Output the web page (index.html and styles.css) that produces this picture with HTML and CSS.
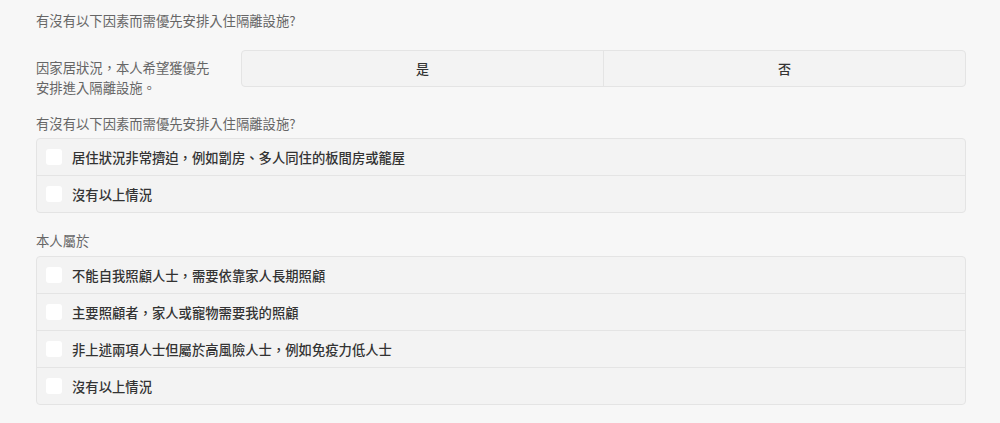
FILE: index.html
```html
<!DOCTYPE html>
<html lang="zh-HK">
<head>
    <meta charset="UTF-8">
    <meta name="viewport" content="width=device-width, initial-scale=1.0">
    <title>隔離設施申請</title>
    <link rel="stylesheet" href="styles.css">
</head>
<body>
    <div class="form">
        <p class="question question--top">有沒有以下因素而需優先安排入住隔離設施?</p>

        <!-- Yes / No row -->
        <div class="choice-row">
            <p class="choice-label">因家居狀況，本人希望獲優先安排進入隔離設施。</p>
            <div class="toggle">
                <button type="button" class="toggle__btn">是</button>
                <button type="button" class="toggle__btn">否</button>
            </div>
        </div>

        <p class="question">有沒有以下因素而需優先安排入住隔離設施?</p>
        <ul class="options">
            <li class="option"><span class="option__box"></span>居住狀況非常擠迫，例如劏房、多人同住的板間房或籠屋</li>
            <li class="option"><span class="option__box"></span>沒有以上情況</li>
        </ul>

        <p class="question question--spaced">本人屬於</p>
        <ul class="options">
            <li class="option"><span class="option__box"></span>不能自我照顧人士，需要依靠家人長期照顧</li>
            <li class="option"><span class="option__box"></span>主要照顧者，家人或寵物需要我的照顧</li>
            <li class="option"><span class="option__box"></span>非上述兩項人士但屬於高風險人士，例如免疫力低人士</li>
            <li class="option"><span class="option__box"></span>沒有以上情況</li>
        </ul>
    </div>
</body>
</html>
```

FILE: styles.css
```css
/* Basic Styling */
body {
    margin: 0;
    padding: 0;
    background-color: #f7f7f7;
    font-family: "Noto Sans CJK TC", "Liberation Sans", sans-serif;
    color: #333;
}

.form {
    padding: 11px 34px 0 36px;
}

p {
    margin: 0;
}

.question {
    font-size: 13.33px;
    line-height: 20px;
    color: #666;
    margin-top: 16px;
    margin-bottom: 4px;
}

.question--top {
    margin-top: 0;
    margin-bottom: 0;
}

.question--spaced {
    margin-top: 18px;
    margin-bottom: 5px;
}

/* Yes / No row */
.choice-row {
    display: flex;
    align-items: flex-start;
    margin-top: 19px;
}

.choice-label {
    width: 176px;
    margin-right: 29px;
    padding-top: 8px;
    font-size: 13.33px;
    line-height: 20px;
    color: #666;
}

.toggle {
    flex: 1;
    display: flex;
    height: 37px;
    box-sizing: border-box;
    border: 1px solid #e4e4e4;
    border-radius: 4px;
    background-color: #f3f3f3;
    overflow: hidden;
}

.toggle__btn {
    flex: 1;
    border: none;
    background: none;
    font-family: inherit;
    font-size: 13px;
    font-weight: 500;
    color: #333;
    padding: 0;
    cursor: pointer;
}

.toggle__btn + .toggle__btn {
    border-left: 1px solid #e4e4e4;
}

/* Checkbox lists */
.options {
    list-style-type: none;
    margin: 0;
    padding: 0;
    border: 1px solid #e4e4e4;
    border-radius: 4px;
    background-color: #f3f3f3;
}

.option {
    display: flex;
    align-items: center;
    height: 36px;
    padding-left: 9px;
    font-size: 13.33px;
    font-weight: 500;
    color: #333;
}

.option + .option {
    border-top: 1px solid #e4e4e4;
}

.option__box {
    width: 16px;
    height: 16px;
    border-radius: 3px;
    background-color: #fff;
    margin-right: 10px;
    flex-shrink: 0;
}
```
